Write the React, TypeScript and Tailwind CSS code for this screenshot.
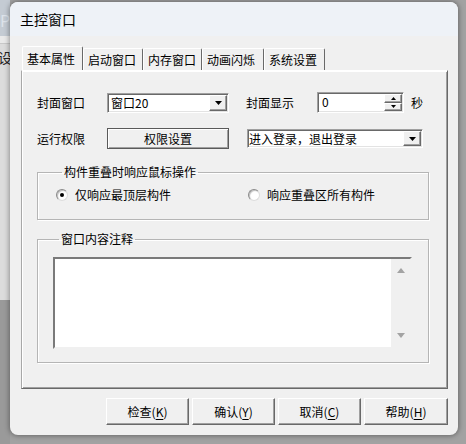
import React from "react";

const raised =
  "border border-t-white border-l-white border-r-[#696969] border-b-[#696969] shadow-[inset_-1px_-1px_0_#a0a0a0] bg-[#f0f0f0]";
const sunken =
  "border border-t-[#a0a0a0] border-l-[#a0a0a0] border-r-white border-b-white shadow-[inset_1px_1px_0_#696969,inset_-1px_-1px_0_#e3e3e3] bg-white";

function Tri({ down = true, color = "#000", w = 7, h = 4 }: { down?: boolean; color?: string; w?: number; h?: number }) {
  return (
    <svg width={w} height={h} viewBox={`0 0 ${w} ${h}`} className="block">
      {down ? (
        <polygon points={`0,0 ${w},0 ${w / 2},${h}`} fill={color} />
      ) : (
        <polygon points={`0,${h} ${w},${h} ${w / 2},0`} fill={color} />
      )}
    </svg>
  );
}

function DropBtn({ w }: { w: string }) {
  return (
    <div className={`${raised} ${w} h-full flex items-center justify-center`}>
      <Tri w={7} h={4} />
    </div>
  );
}

function Radio({ checked, label, className = "" }: { checked?: boolean; label: string; className?: string }) {
  return (
    <div className={`flex items-center ${className}`}>
      <div className="w-[12px] h-[12px] rounded-full border border-t-[#8a8a8a] border-l-[#8a8a8a] border-r-[#dcdcdc] border-b-[#dcdcdc] bg-white flex items-center justify-center shadow-[inset_1px_1px_1px_#bdbdbd]">
        {checked && <div className="w-[4px] h-[4px] rounded-full bg-black" />}
      </div>
      <span className="ml-[7px]">{label}</span>
    </div>
  );
}

function Btn({ text, k, className = "" }: { text: string; k: string; className?: string }) {
  return (
    <div className={`${raised} h-[27px] flex items-center justify-center ${className}`}>
      <span>
        {text}(<span className="underline underline-offset-2">{k}</span>)
      </span>
    </div>
  );
}

export default function App() {
  const tabs = [
    { t: "基本属性", w: "w-[61px]", sel: true },
    { t: "启动窗口", w: "w-[60px]" },
    { t: "内存窗口", w: "w-[59px]" },
    { t: "动画闪烁", w: "w-[62px]" },
    { t: "系统设置", w: "w-[61px]" },
  ];
  return (
    <div className="w-[466px] h-[444px] bg-[#a2a2a2] flex overflow-hidden font-['Noto_Sans_CJK_SC','Noto_Sans',sans-serif] text-[12px] leading-none text-black">
      {/* background window strip */}
      <div className="w-[10px] shrink-0 flex flex-col overflow-hidden">
        <div className="h-[36px] bg-[#c4cbd3] text-[#dde3ea] text-[16px] pt-[12px] whitespace-nowrap overflow-hidden">Pp</div>
        <div className="h-[8px] bg-[#e9e9e9] border-b border-[#c8c8c8]" />
        <div className="h-[256px] bg-[#dcdcdc] overflow-hidden">
          <div className="mt-[6px] -ml-[2px] text-[14px] text-[#222] whitespace-nowrap">设</div>
        </div>
        <div className="flex-1 bg-[#9a9a9a]" />
      </div>

      {/* dialog */}
      <div className="mt-[2px] w-[448px] h-[433px] shrink-0 rounded-[8px] bg-[#f0f0f0] shadow-[0_0_5px_1px_rgba(0,0,0,0.35)] flex flex-col overflow-hidden">
        <div className="h-[34px] bg-[#eef2f7] flex items-center pl-[10px] text-[14px]">主控窗口</div>
        <div className="flex flex-col pl-[11px] pr-[10px] pt-[10px]">
          {/* tabs */}
          <div className="h-[24px] flex items-end pl-[1px]">
            {tabs.map((tb) =>
              tb.sel ? (
                <div
                  key={tb.t}
                  className={`${tb.w} h-[24px] border-l border-t border-white border-r border-r-[#696969] rounded-t-[2px] pl-[4px] flex items-center`}
                >
                  {tb.t}
                </div>
              ) : (
                <div
                  key={tb.t}
                  className={`${tb.w} h-[22px] border-l border-t border-white border-r border-r-[#696969] rounded-t-[2px] pl-[4px] flex items-center`}
                >
                  {tb.t}
                </div>
              )
            )}
          </div>
          {/* panel */}
          <div className="h-[319px] border border-t-white border-l-[#a8a8a8] border-r-[#696969] border-b-[#696969] shadow-[inset_1px_1px_0_#fff,inset_-1px_-1px_0_#a0a0a0] pt-[21px] pl-[15px] flex flex-col">
            {/* row 1 */}
            <div className="h-[21px] flex items-center">
              <div className="w-[70px]">封面窗口</div>
              <div className={`${sunken} w-[122px] h-[20px] flex items-stretch p-[1px]`}>
                <div className="flex-1 flex items-center pl-[2px]">窗口20</div>
                <DropBtn w="w-[18px]" />
              </div>
              <div className="ml-[17px] w-[71px]">封面显示</div>
              <div className={`${sunken} w-[87px] h-[21px] flex items-stretch p-[1px]`}>
                <div className="flex-1 pl-[3px] pt-[2px]">0</div>
                <div className="w-[18px] flex flex-col">
                  <div className={`${raised} flex-1 flex items-center justify-center`}>
                    <Tri down={false} w={5} h={3} />
                  </div>
                  <div className={`${raised} flex-1 flex items-center justify-center`}>
                    <Tri w={5} h={3} />
                  </div>
                </div>
              </div>
              <div className="ml-[7px]">秒</div>
            </div>
            {/* row 2 */}
            <div className="mt-[15px] h-[21px] flex items-center">
              <div className="w-[70px]">运行权限</div>
              <div className="w-[122px] h-[21px] border border-[#5a5a5a] shadow-[inset_1px_1px_0_#fff,inset_-1px_-1px_0_#a0a0a0] bg-[#f0f0f0] flex items-center justify-center">
                权限设置
              </div>
              <div className={`${sunken} ml-[18px] w-[176px] h-[19px] flex items-stretch p-[1px]`}>
                <div className="flex-1 flex items-center">进入登录，退出登录</div>
                <DropBtn w="w-[18px]" />
              </div>
            </div>
            {/* group 1 */}
            <fieldset className="mt-[16px] w-[392px] border border-[#b5b5b5] shadow-[inset_1px_1px_0_#fff,1px_1px_0_#fff] pt-[8px] pb-[16px] pl-[18px]">
              <legend className="ml-[6px] px-[2px] leading-[14px]">构件重叠时响应鼠标操作</legend>
              <div className="flex items-center h-[16px]">
                <Radio checked label="仅响应最顶层构件" className="w-[192px]" />
                <Radio label="响应重叠区所有构件" />
              </div>
            </fieldset>
            {/* group 2 */}
            <fieldset className="mt-[12px] w-[392px] border border-[#b5b5b5] shadow-[inset_1px_1px_0_#fff,1px_1px_0_#fff] pt-[11px] pb-[13px] pl-[15px]">
              <legend className="ml-[6px] px-[2px] leading-[14px]">窗口内容注释</legend>
              <div className="w-[359px] h-[92px] border-2 border-t-[#7a7a7a] border-l-[#7a7a7a] border-r-[#f0f0f0] border-b-[#f0f0f0] bg-white flex justify-end">
                <div className="w-[19px] h-full bg-[#f0f0f0] flex flex-col items-center justify-between py-[9px]">
                  <Tri down={false} color="#a3a3a3" w={8} h={5} />
                  <Tri color="#a3a3a3" w={8} h={5} />
                </div>
              </div>
            </fieldset>
          </div>
          {/* buttons */}
          <div className="mt-[9px] flex justify-end gap-[3px]">
            <Btn text="检查" k="K" className="w-[83px]" />
            <Btn text="确认" k="Y" className="w-[83px]" />
            <Btn text="取消" k="C" className="w-[83px]" />
            <Btn text="帮助" k="H" className="w-[84px]" />
          </div>
        </div>
      </div>
    </div>
  );
}
